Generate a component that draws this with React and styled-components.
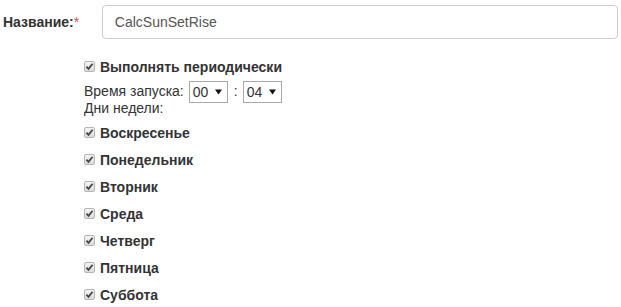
import React from "react";
import styled, { createGlobalStyle } from "styled-components";

const GlobalStyle = createGlobalStyle`
  body {
    margin: 0;
    background: #fff;
    font-family: "Liberation Sans", Arial, sans-serif;
    font-size: 14px;
    color: #333;
  }
`;

const days = [
  "Воскресенье",
  "Понедельник",
  "Вторник",
  "Среда",
  "Четверг",
  "Пятница",
  "Суббота",
];

function App() {
  return (
    <>
      <GlobalStyle />
      <Form>
        <NameRow>
          <Label>
            Название:<Star>*</Star>
          </Label>
          <TextInput>CalcSunSetRise</TextInput>
        </NameRow>
        <Options>
          <CheckRow>
            <Check />
            <span>Выполнять периодически</span>
          </CheckRow>
          <TimeRow>
            Время запуска:
            <Select value="00" />
            <Colon>:</Colon>
            <Select value="04" />
          </TimeRow>
          <Plain>Дни недели:</Plain>
          <DayList>
            {days.map((day) => (
              <CheckRow key={day}>
                <Check />
                <span>{day}</span>
              </CheckRow>
            ))}
          </DayList>
        </Options>
      </Form>
    </>
  );
}

const Check = () => (
  <Box>
    <svg width="9" height="9" viewBox="0 0 9 9">
      <path
        d="M1.4 4.6 L3.5 6.8 L7.6 1.8"
        fill="none"
        stroke="#444"
        strokeWidth="1.8"
      />
    </svg>
  </Box>
);

const Select = ({ value }) => (
  <SelectBox>
    <span>{value}</span>
    <svg width="7" height="6" viewBox="0 0 7 6">
      <path d="M0 0.5 H7 L3.5 5.5 Z" fill="#111" />
    </svg>
  </SelectBox>
);

const Form = styled.div`
  padding: 5px 3px 0 3px;
`;

const NameRow = styled.div`
  display: flex;
  align-items: center;
`;

const Label = styled.div`
  width: 101px;
  font-weight: bold;
  font-size: 14px;
  color: #333;
`;

const Star = styled.span`
  color: #d9534f;
  font-weight: normal;
`;

const TextInput = styled.div`
  width: 501px;
  height: 32px;
  border: 1px solid #ccc;
  border-radius: 4px;
  padding: 0 12px;
  box-sizing: content-box;
  display: flex;
  align-items: center;
  color: #555;
  font-size: 14px;
`;

const Options = styled.div`
  margin-left: 81px;
  margin-top: 19px;
`;

const CheckRow = styled.div`
  display: flex;
  align-items: center;
  gap: 5px;
  font-weight: bold;
  font-size: 14px;
  height: 18px;
`;

const Box = styled.span`
  box-sizing: border-box;
  width: 11px;
  height: 11px;
  border: 1px solid #b5b5b5;
  border-radius: 2px;
  background: linear-gradient(#f4f4f4, #dcdcdc);
  display: flex;
  align-items: center;
  justify-content: center;
  position: relative;
  top: -1px;
`;

const TimeRow = styled.div`
  display: flex;
  align-items: center;
  height: 18px;
  margin-top: 6px;
`;

const SelectBox = styled.div`
  display: flex;
  align-items: center;
  justify-content: space-between;
  box-sizing: border-box;
  width: 39px;
  height: 22px;
  border: 1px solid #a9a9a9;
  padding: 0 5px 0 3px;
  margin-left: 5px;
  font-size: 14px;
  color: #333;
  background: #fff;
  position: relative;
  top: 1px;
`;

const Colon = styled.span`
  margin: 0 0 0 6px;
`;

const Plain = styled.div`
  height: 16px;
  line-height: 16px;
`;

const DayList = styled.div`
  display: flex;
  flex-direction: column;
  gap: 9px;
  margin-top: 8px;
`;

export default App;
